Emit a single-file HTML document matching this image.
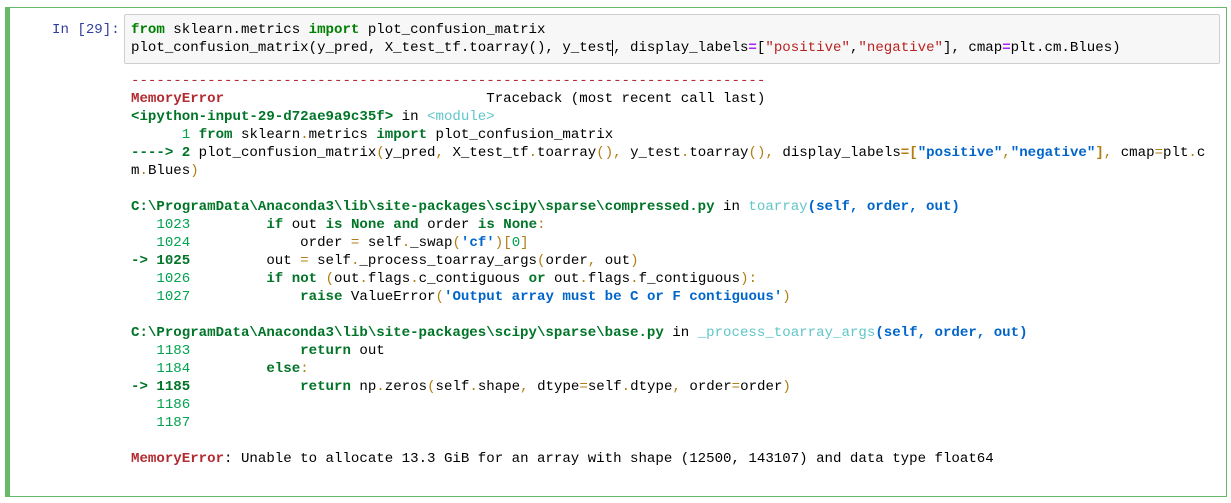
<!DOCTYPE html>
<html><head><meta charset="utf-8">
<style>
html,body{margin:0;padding:0;background:#fff;width:1231px;height:503px;overflow:hidden}
.cell{position:absolute;left:5px;top:7px;width:1216px;height:488px;border:1px solid #66bb6a;border-left:5px solid #66bb6a;}
.prompt{position:absolute;left:52px;top:21px;font:14.1px/18px "Liberation Mono",monospace;color:#303f9f;}
.inbox{position:absolute;left:124px;top:14px;width:1094px;height:48px;background:#f7f7f7;border:1px solid #cfcfcf;border-radius:2px;}
pre{margin:0;font:14.1px/18px "Liberation Mono",monospace;color:#000;white-space:pre;position:absolute;left:131px;}
.k{color:#008000;font-weight:bold}
.s{color:#ba2121}
.o{color:#aa22ff;font-weight:bold}
.r{color:#b22b31}
.rb{color:#b22b31;font-weight:bold}
.g{color:#007427;font-weight:bold}
.gb{color:#00a250}
.c{color:#60c6c8}
.y{color:#b27d12}
.yb{color:#b27d12;font-weight:bold}
.b{color:#0065ca;font-weight:bold}
.cur{border-left:1px solid #000;margin-left:-1px}
</style></head><body>
<div class="cell"></div>
<div class="prompt">In [29]:</div>
<div class="inbox"></div>
<pre style="top:21px"><span class="k">from</span> sklearn.metrics <span class="k">import</span> plot_confusion_matrix
plot_confusion_matrix(y_pred, X_test_tf.toarray(), y_test<span class="cur"></span>, display_labels<span class="o">=</span>[<span class="s">"positive"</span>,<span class="s">"negative"</span>], cmap<span class="o">=</span>plt.cm.Blues)</pre>
<pre style="top:72px"><span class="r">---------------------------------------------------------------------------</span>
<span class="rb">MemoryError</span>                               Traceback (most recent call last)
<span class="g">&lt;ipython-input-29-d72ae9a9c35f&gt;</span> in <span class="c">&lt;module&gt;</span>
<span class="gb">      1</span> <span class="g">from</span> sklearn<span class="y">.</span>metrics <span class="g">import</span> plot_confusion_matrix
<span class="g">----&gt; 2</span> plot_confusion_matrix<span class="y">(</span>y_pred<span class="y">,</span> X_test_tf<span class="y">.</span>toarray<span class="y">(),</span> y_test<span class="y">.</span>toarray<span class="y">(),</span> display_labels<span class="yb">=[</span><span class="b">"positive"</span><span class="y">,</span><span class="b">"negative"</span><span class="yb">]</span><span class="y">,</span> cmap<span class="y">=</span>plt<span class="y">.</span>c
m<span class="y">.</span>Blues<span class="y">)</span>

<span class="g">C:\ProgramData\Anaconda3\lib\site-packages\scipy\sparse\compressed.py</span> in <span class="c">toarray</span><span class="b">(self, order, out)</span>
<span class="gb">   1023</span>         <span class="g">if</span> out <span class="g">is</span> <span class="g">None</span> <span class="g">and</span> order <span class="g">is</span> <span class="g">None</span><span class="y">:</span>
<span class="gb">   1024</span>             order <span class="y">=</span> self<span class="y">.</span>_swap<span class="y">(</span><span class="b">'cf'</span><span class="y">)[</span><span class="gb">0</span><span class="y">]</span>
<span class="g">-&gt; 1025</span>         out <span class="y">=</span> self<span class="y">.</span>_process_toarray_args<span class="y">(</span>order<span class="y">,</span> out<span class="y">)</span>
<span class="gb">   1026</span>         <span class="g">if</span> <span class="g">not</span> <span class="y">(</span>out<span class="y">.</span>flags<span class="y">.</span>c_contiguous <span class="g">or</span> out<span class="y">.</span>flags<span class="y">.</span>f_contiguous<span class="y">):</span>
<span class="gb">   1027</span>             <span class="g">raise</span> ValueError<span class="y">(</span><span class="b">'Output array must be C or F contiguous'</span><span class="y">)</span>

<span class="g">C:\ProgramData\Anaconda3\lib\site-packages\scipy\sparse\base.py</span> in <span class="c">_process_toarray_args</span><span class="b">(self, order, out)</span>
<span class="gb">   1183</span>             <span class="g">return</span> out
<span class="gb">   1184</span>         <span class="g">else</span><span class="y">:</span>
<span class="g">-&gt; 1185</span>             <span class="g">return</span> np<span class="y">.</span>zeros<span class="y">(</span>self<span class="y">.</span>shape<span class="y">,</span> dtype<span class="y">=</span>self<span class="y">.</span>dtype<span class="y">,</span> order<span class="y">=</span>order<span class="y">)</span>
<span class="gb">   1186</span>
<span class="gb">   1187</span>

<span class="rb">MemoryError</span>: Unable to allocate 13.3 GiB for an array with shape (12500, 143107) and data type float64</pre>
</body></html>
